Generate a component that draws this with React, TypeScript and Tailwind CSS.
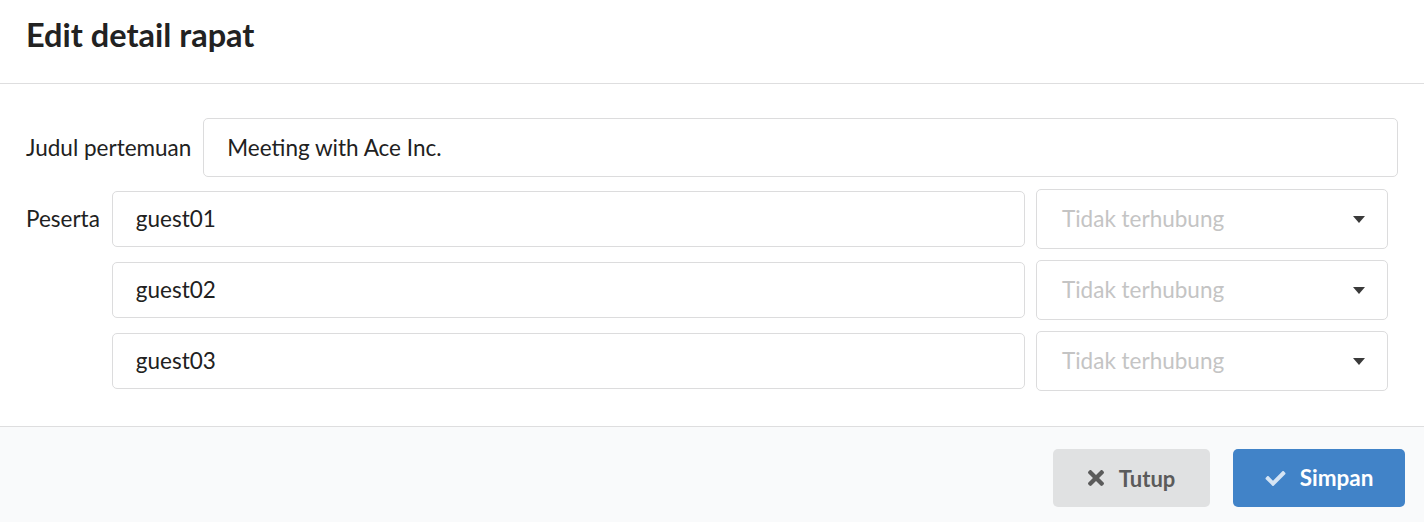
import React from "react";

function Caret() {
  return (
    <svg width="12" height="7" viewBox="0 0 12 7" className="shrink-0">
      <path d="M0 0 L12 0 L6 7 Z" fill="#3a3a3a" />
    </svg>
  );
}

function TimesIcon() {
  return (
    <svg width="16" height="16" viewBox="0 89 352 334" className="shrink-0">
      <path
        fill="currentColor"
        d="M242.72 256l100.07-100.07c12.28-12.28 12.28-32.19 0-44.48l-22.24-22.24c-12.28-12.28-32.19-12.28-44.48 0L176 189.28 75.930 89.21c-12.28-12.28-32.19-12.28-44.48 0L9.21 111.45c-12.28 12.28-12.28 32.19 0 44.48L109.28 256 9.21 356.07c-12.28 12.28-12.28 32.19 0 44.48l22.24 22.24c12.28 12.28 32.2 12.28 44.48 0L176 322.72l100.07 100.07c12.28 12.28 32.2 12.28 44.48 0l22.24-22.24c12.28-12.28 12.28-32.19 0-44.48L242.72 256z"
      />
    </svg>
  );
}

function CheckIcon() {
  return (
    <svg width="21" height="15" viewBox="0 64 512 384" className="shrink-0">
      <path
        fill="currentColor"
        d="M173.898 439.404l-166.4-166.4c-9.997-9.997-9.997-26.206 0-36.204l36.203-36.204c9.997-9.998 26.207-9.998 36.204 0L192 312.69 432.095 72.596c9.997-9.997 26.207-9.997 36.204 0l36.203 36.204c9.997 9.997 9.997 26.206 0 36.204l-294.4 294.401c-9.998 9.997-26.207 9.997-36.204-.001z"
      />
    </svg>
  );
}

function TextInput({ value, h }: { value: string; h: string }) {
  return (
    <div
      className={`flex-1 ${h} flex items-center px-[23px] border border-[#dcdcdd] rounded-[5px] bg-white text-[22.5px] text-[#212121]`}
    >
      {value}
    </div>
  );
}

function Dropdown() {
  return (
    <div className="w-[352px] h-[60px] shrink-0 flex items-center justify-between pl-[25px] pr-[22px] border border-[#dcdcdd] rounded-[5px] bg-white text-[22.5px] text-[#c4c4c4]">
      <span>Tidak terhubung</span>
      <Caret />
    </div>
  );
}

export default function App() {
  const guests = ["guest01", "guest02", "guest03"];
  return (
    <div className="w-[1424px] h-[522px] bg-white flex flex-col font-['Lato',sans-serif] overflow-hidden">
      <div className="h-[84px] shrink-0 border-b border-[#dededf] px-[26px] flex items-center">
        <h1 className="text-[32.5px] font-bold text-[#222222] leading-none -mt-[12px]">
          Edit detail rapat
        </h1>
      </div>
      <div className="px-[26px] pt-[34px] pb-[35px] flex flex-col gap-[12px]">
        <div className="flex items-center gap-[12px]">
          <label className="text-[22.5px] text-[#212121]">Judul pertemuan</label>
          <TextInput value="Meeting with Ace Inc." h="h-[59px]" />
        </div>
        <div className="flex items-start gap-[12px] mr-[10px]">
          <label className="h-[60px] flex items-center text-[22.5px] text-[#212121]">
            Peserta
          </label>
          <div className="flex-1 flex flex-col gap-[11px]">
            {guests.map((g) => (
              <div key={g} className="flex items-center gap-[11px]">
                <TextInput value={g} h="h-[56px]" />
                <Dropdown />
              </div>
            ))}
          </div>
        </div>
      </div>
      <div className="flex-1 bg-[#f9fafb] border-t border-[#dededf] flex justify-end items-start gap-[23px] pt-[22px] pr-[19px]">
        <button className="w-[157px] h-[58px] rounded-[5px] bg-[#e0e1e2] text-[#5b5b5b] flex items-center justify-center gap-[15px] text-[22px] font-bold">
          <TimesIcon />
          <span>Tutup</span>
        </button>
        <button className="w-[172px] h-[58px] rounded-[5px] bg-[#4183c8] text-white flex items-center justify-center gap-[14px] text-[22.5px] font-bold">
          <span className="text-[#d5e4f4] flex">
            <CheckIcon />
          </span>
          <span>Simpan</span>
        </button>
      </div>
    </div>
  );
}
